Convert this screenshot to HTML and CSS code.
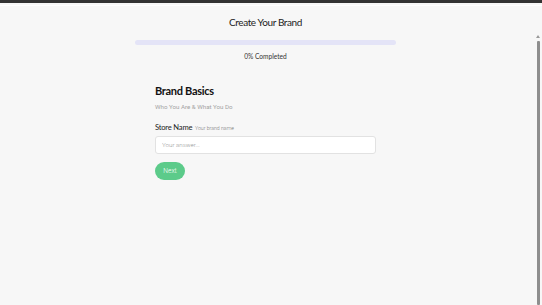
FILE: index.html
```html
<!DOCTYPE html>
<html lang="en">
<head>
    <meta charset="UTF-8">
    <meta name="viewport" content="width=device-width, initial-scale=1.0">
    <title>Create Your Brand</title>
    <link rel="stylesheet" href="styles.css">
</head>
<body>
    <div class="topbar"></div>

    <div class="page">
        <!-- progress header -->
        <div class="progress">
            <h1 class="progress-title">Create Your Brand</h1>
            <div class="progress-track"><div class="progress-fill" style="width: 0%"></div></div>
            <p class="progress-label">0% Completed</p>
        </div>

        <!-- step form -->
        <form class="step">
            <h2 class="step-title">Brand Basics</h2>
            <p class="step-sub">Who You Are &amp; What You Do</p>

            <label class="field-label" for="store-name">Store Name <span class="field-hint">Your brand name</span></label>
            <input class="field-input" id="store-name" type="text" placeholder="Your answer...">

            <button type="button" class="next-btn">Next</button>
        </form>
    </div>

    <!-- scrollbar -->
    <div class="scrollbar">
        <span class="scroll-arrow"></span>
        <span class="scroll-thumb"></span>
    </div>
</body>
</html>
```

FILE: styles.css
```css
*{
    margin: 0;
    padding: 0;
    box-sizing: border-box;
}
body{
    font-family: Lato, "Open Sans", sans-serif;
    background: #f7f7f7;
    height: 100vh;
    overflow: hidden;
    color: #111;
}
.topbar{
    height: 3px;
    background: #333;
}
.page{
    border-top: 1px solid #fff;
    margin-top: 2px;
    padding-right: 11px;
}
.progress{
    width: 261px;
    margin: 0 auto;
    padding-top: 9px;
    text-align: center;
}
.progress-title{
    font-size: 10px;
    font-weight: 400;
    letter-spacing: -0.4px;
    color: #222;
    line-height: 14px;
}
.progress-track{
    height: 5px;
    margin-top: 11px;
    background: #e4e4f7;
    border-radius: 3px;
    overflow: hidden;
}
.progress-fill{
    height: 100%;
    background: #5ccb8a;
}
.progress-label{
    margin-top: 7px;
    font-size: 6.6px;
    line-height: 9px;
    color: #333;
}
.step{
    width: 221px;
    margin: 22px auto 0;
    display: flex;
    flex-direction: column;
    align-items: flex-start;
}
.step-title{
    font-size: 11px;
    font-weight: 700;
    letter-spacing: -0.3px;
    color: #111;
    line-height: 16px;
}
.step-sub{
    margin-top: 4px;
    font-family: Roboto, sans-serif;
    font-weight: 400;
    font-size: 6.2px;
    line-height: 8px;
    color: #a3a3a3;
}
.field-label{
    margin-top: 11px;
    font-size: 7.6px;
    line-height: 10px;
    letter-spacing: -0.2px;
    color: #222;
}
.field-hint{
    font-family: Roboto, sans-serif;
    font-weight: 300;
    font-size: 5.2px;
    letter-spacing: 0;
    color: #777;
    margin-left: 1px;
}
.field-input{
    margin-top: 3px;
    width: 100%;
    height: 18px;
    padding: 0 6px;
    border: 1px solid #e2e2e2;
    border-radius: 3px;
    background: #fff;
    font-family: Roboto, sans-serif;
    font-weight: 300;
    font-size: 6.2px;
    outline: none;
}
.field-input::placeholder{
    color: #999;
}
.next-btn{
    margin-top: 8px;
    width: 30px;
    height: 18px;
    border: none;
    border-radius: 9px;
    background: #5ccb8a;
    color: #fff;
    font-family: Roboto, sans-serif;
    font-weight: 300;
    font-size: 6.6px;
    cursor: pointer;
}
.scrollbar{
    position: absolute;
    top: 35px;
    right: 2px;
    bottom: 0;
    width: 4px;
    display: flex;
    flex-direction: column;
    align-items: center;
}
.scroll-arrow{
    width: 0;
    height: 0;
    border-left: 2px solid transparent;
    border-right: 2px solid transparent;
    border-bottom: 3px solid #999;
}
.scroll-thumb{
    margin-top: 3px;
    flex: 1;
    width: 3px;
    background: #8e8e8e;
    border-radius: 1px;
}
```
